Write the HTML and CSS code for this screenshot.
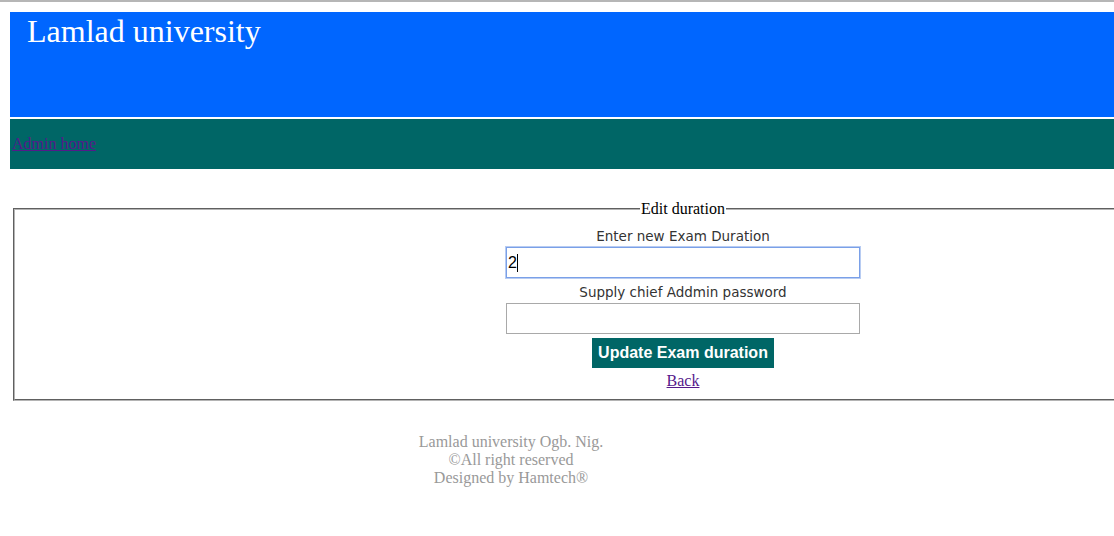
FILE: index.html
```html
<!DOCTYPE html>
<html>
<head>
<meta charset="utf-8">
<title>Edit duration</title>
<link rel="stylesheet" href="styles.css">
</head>
<body>
<div class="topline"></div>
<div class="page">
  <header class="banner"><h1 class="brand">Lamlad university</h1></header>
  <nav class="navbar"><a class="navlink" href="#">Admin home</a></nav>
  <main class="main">
    <fieldset class="box">
      <legend class="box-legend">Edit duration</legend>
      <form class="form">
        <label class="lbl">Enter new Exam Duration</label>
        <div class="field field-focus"><span class="val">2</span><span class="caret"></span></div>
        <label class="lbl">Supply chief Addmin password</label>
        <input class="field" type="password">
        <button class="btn" type="button">Update Exam duration</button>
        <a class="back" href="#">Back</a>
      </form>
    </fieldset>
  </main>
  <footer class="foot">
    <div>Lamlad university Ogb. Nig.</div>
    <div>©All right reserved</div>
    <div>Designed by Hamtech®</div>
  </footer>
</div>
</body>
</html>
```
FILE: styles.css
```css
html, body {
  margin: 0;
  padding: 0;
  overflow: hidden;
  background: #fff;
}
body {
  font-family: "Liberation Serif", "Times New Roman", serif;
  font-size: 16px;
}
.topline {
  height: 2px;
  background: #b6b6b6;
}
.page {
  width: 1350px;
  margin-left: 10px;
}
.banner {
  margin-top: 10px;
  height: 105px;
  background: #0066ff;
  padding-left: 17px;
  box-sizing: border-box;
}
.brand {
  margin: 0;
  padding-top: 1px;
  font-weight: normal;
  font-size: 32px;
  line-height: 37px;
  color: #fff;
}
.navbar {
  margin-top: 2px;
  height: 50px;
  background: #006666;
  display: flex;
  align-items: center;
  padding-left: 2px;
  box-sizing: border-box;
}
.navlink {
  color: #551a8b;
}
.main {
  padding-top: 31px;
}
.box {
  margin: 0 0 0 3px;
  width: 1340px;
  box-sizing: border-box;
  border: 2px groove #b4b4b4;
  padding: 8px 0 9px;
}
.box-legend {
  margin: 0 auto;
  padding: 0 1px;
  color: #000;
}
.form {
  display: flex;
  flex-direction: column;
  align-items: center;
  padding-top: 1px;
}
.lbl {
  font-family: "DejaVu Sans", Verdana, sans-serif;
  font-size: 13.5px;
  color: #333;
  line-height: 18px;
  margin-bottom: 2px;
}
.field {
  width: 354px;
  height: 31px;
  box-sizing: border-box;
  border: 1px solid #a9a9a9;
  font-family: "Liberation Sans", Arial, sans-serif;
  font-size: 16px;
  padding: 0 1px;
  margin-bottom: 5px;
  outline: none;
  background: #fff;
}
.field-focus {
  display: flex;
  align-items: center;
  border: 1px solid #7aa0e8;
  box-shadow: 0 0 0 1px #b8ccf2;
  color: #000;
}
.val {
  line-height: 18px;
}
.caret {
  width: 1px;
  height: 18px;
  background: #000;
}
.btn {
  margin-top: -1px;
  width: 182px;
  height: 30px;
  background: #006666;
  color: #fff;
  border: none;
  font-family: "Liberation Sans", Arial, sans-serif;
  font-weight: bold;
  font-size: 16px;
  padding: 0;
}
.back {
  margin-top: 4px;
  color: #551a8b;
  line-height: 18px;
}
.foot {
  width: 1002px;
  text-align: center;
  color: #999;
  line-height: 18px;
  padding-top: 32px;
}
```
